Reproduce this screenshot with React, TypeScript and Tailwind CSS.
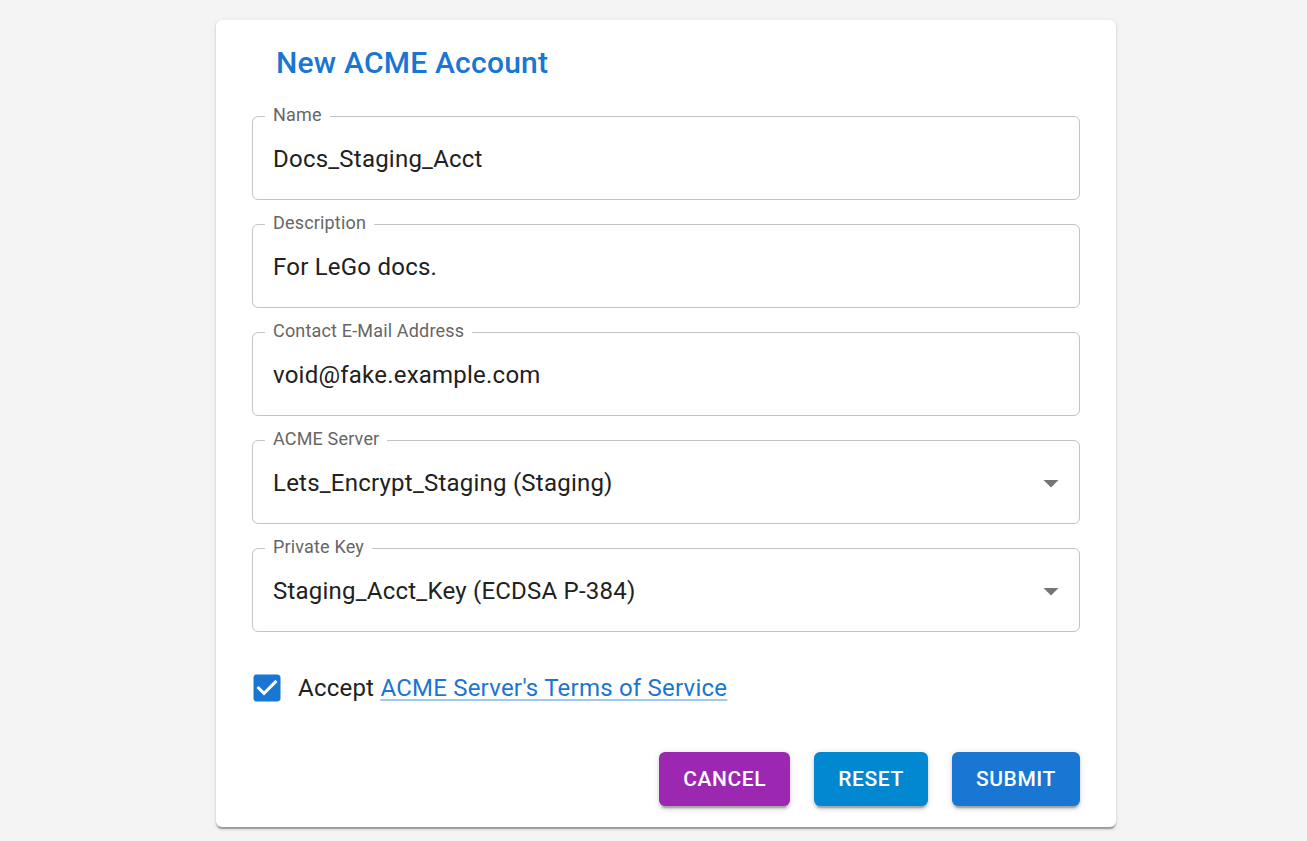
import React from 'react';

const Field = ({ label, value, select }: { label: string; value: string; select?: boolean }) => {
  return (
    <fieldset className="border border-[#c4c4c4] rounded-[6px] px-[12px] pt-[16px] pb-[23px] m-0 min-w-0">
      <legend className="px-[8px] pb-[2px] text-[18px] leading-[18px] tracking-[0.17px] text-[#666666]">{label}</legend>
      <div className="flex items-center justify-between h-[34px] pl-[8px]">
        <span className="text-[24px] leading-[34px] tracking-[0.225px] text-[#212121]">{value}</span>
        {select && (
          <svg viewBox="0 0 24 24" className="w-[36px] h-[36px] shrink-0 -mr-[2px]">
            <path d="M7 10l5 5 5-5z" fill="rgba(0,0,0,0.54)" />
          </svg>
        )}
      </div>
    </fieldset>
  );
};

const btn =
  'h-[54px] pt-[1px] px-[24px] rounded-[6px] text-white text-[21px] font-medium tracking-[0.6px] uppercase shadow-[0_4.5px_1.5px_-3px_rgba(0,0,0,0.2),0_3px_3px_0_rgba(0,0,0,0.14),0_1.5px_7.5px_0_rgba(0,0,0,0.12)]';

const App = () => {
  return (
    <div className="min-h-screen bg-[#f4f4f4] pt-[20px] pl-[216px] font-['Roboto',sans-serif]">
      <div className="w-[900px] bg-white rounded-[6px] pt-[19px] px-[36px] pb-[21px] shadow-[0_3px_1.5px_-1.5px_rgba(0,0,0,0.2),0_1.5px_1.5px_0_rgba(0,0,0,0.14),0_1.5px_4.5px_0_rgba(0,0,0,0.12)]">
        <h1 className="pl-[24px] text-[30px] leading-[48px] font-medium tracking-[0.225px] text-[#1976d2]">New ACME Account</h1>

        <div className="mt-[19px] flex flex-col gap-[14px]">
          <Field label="Name" value="Docs_Staging_Acct" />
          <Field label="Description" value="For LeGo docs." />
          <Field label="Contact E-Mail Address" value="void@fake.example.com" />
          <Field label="ACME Server" value="Lets_Encrypt_Staging (Staging)" select />
          <Field label="Private Key" value="Staging_Acct_Key (ECDSA P-384)" select />
        </div>

        <div className="mt-[28.5px] h-[54px] flex items-center">
          <svg viewBox="0 0 24 24" className="w-[36px] h-[36px] -ml-[3px] shrink-0">
            <path
              fill="#1976d2"
              d="M19 3H5c-1.11 0-2 .9-2 2v14c0 1.1.89 2 2 2h14c1.11 0 2-.9 2-2V5c0-1.1-.89-2-2-2zm-9 14l-5-5 1.41-1.41L10 14.17l7.59-7.59L19 8l-9 9z"
            />
          </svg>
          <span className="ml-[13px] text-[24px] leading-[36px] tracking-[0.225px] text-[#212121]">
            Accept{' '}
            <a className="text-[#1976d2] underline decoration-[rgba(25,118,210,0.4)] underline-offset-[3px]">
              ACME Server's Terms of Service
            </a>
          </span>
        </div>

        <div className="mt-[37.5px] flex justify-end gap-[24px]">
          <button className={`${btn} bg-[#9c27b0]`}>Cancel</button>
          <button className={`${btn} bg-[#0288d1]`}>Reset</button>
          <button className={`${btn} bg-[#1976d2]`}>Submit</button>
        </div>
      </div>
    </div>
  );
};

export default App;
